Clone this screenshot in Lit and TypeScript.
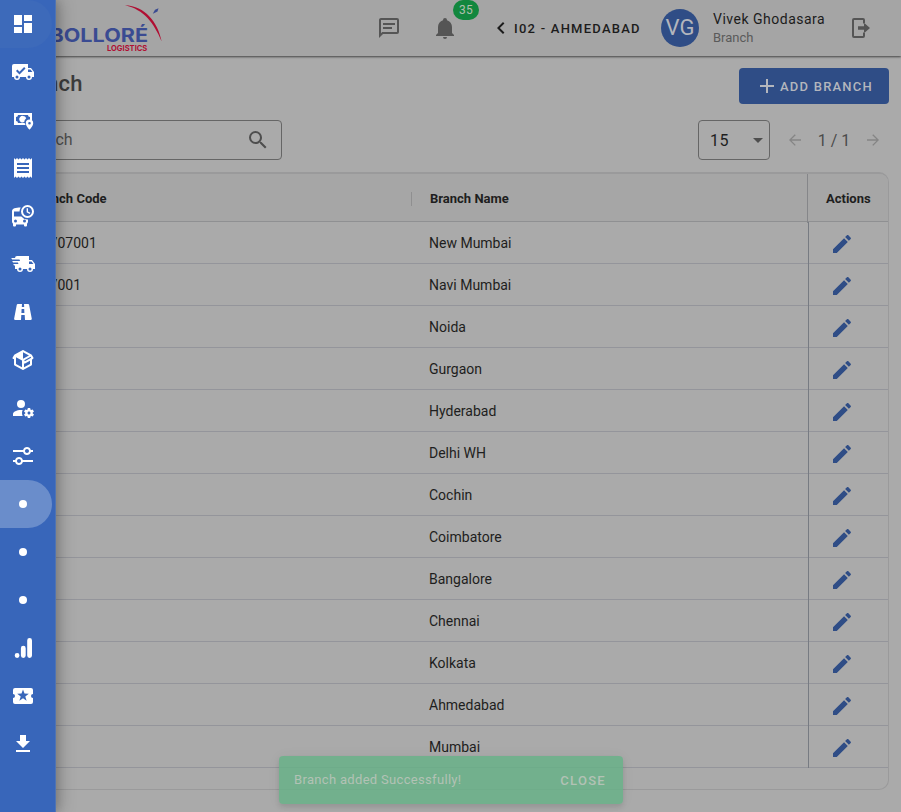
import { LitElement, html, svg, css } from "lit";
import { customElement, property } from "lit/decorators.js";
import { classMap } from "lit/directives/class-map.js";

const ICONS: Record<string, string> = {
  dashboard: "M13,3V9H21V3M13,21H21V11H13M3,21H11V15H3M3,13H11V3H3V13Z",
  truckCheck:
    "M3 4A2 2 0 0 0 1 6V17H3A3 3 0 0 0 9 17H15A3 3 0 0 0 21 17H23V12L20 8H17V4ZM6 15.5A1.5 1.5 0 1 1 6 18.5A1.5 1.5 0 1 1 6 15.5ZM18 15.5A1.5 1.5 0 1 1 18 18.5A1.5 1.5 0 1 1 18 15.5ZM17 9.5H19.5L21.46 12H17ZM5 11L6.4 9.6L8.5 11.7L13.1 7L14.5 8.4L8.5 14.4Z",
  cashMarker:
    "M3 5.1H21V12.3A5 5 0 0 0 19 11.6V9.1A2 2 0 0 1 17 7.1H7A2 2 0 0 1 5 9.1V13.1A2 2 0 0 1 7 15.1H13.6L14.6 17.1H3ZM12 7.9A3.3 3.3 0 0 1 15.2 10.2A5 5 0 0 0 13.2 14A3.3 3.3 0 1 1 12 7.9ZM18.5 11.6A3.7 3.7 0 0 1 22.2 15.3C22.2 18 18.5 21.8 18.5 21.8S14.8 18 14.8 15.3A3.7 3.7 0 0 1 18.5 11.6ZM18.5 14A1.3 1.3 0 1 0 18.5 16.6A1.3 1.3 0 1 0 18.5 14Z",
  receipt:
    "M3,22L4.5,20.5L6,22L7.5,20.5L9,22L10.5,20.5L12,22L13.5,20.5L15,22L16.5,20.5L18,22L19.5,20.5L21,22V2L19.5,3.5L18,2L16.5,3.5L15,2L13.5,3.5L12,2L10.5,3.5L9,2L7.5,3.5L6,2L4.5,3.5L3,2ZM18,9H6V7H18ZM18,13H6V11H18ZM18,17H6V15H18Z",
  busClock:
    "M16.5 1A6.5 6.5 0 1 1 16.5 14A6.5 6.5 0 1 1 16.5 1ZM16.5 3A4.5 4.5 0 1 0 16.5 12A4.5 4.5 0 1 0 16.5 3ZM15.6 4.3H17V7.4L19.4 8.8L18.7 10L15.6 8.2ZM9.7 3.6C4.6 3.7 1 4.2 1 7.6V17.5C1 18.4 1.4 19.2 2 19.7V21.5A1 1 0 0 0 3 22.5H4A1 1 0 0 0 5 21.5V20.5H13V21.5A1 1 0 0 0 14 22.5H15A1 1 0 0 0 16 21.5V19.7C16.6 19.2 17 18.4 17 17.5V15.5A8 8 0 0 1 10.3 12.5H3V7.6H8.5A8 8 0 0 1 9.7 3.6ZM4.5 15.5A1.5 1.5 0 1 1 4.5 18.5A1.5 1.5 0 1 1 4.5 15.5ZM13.5 15.5A1.5 1.5 0 1 1 13.5 18.5A1.5 1.5 0 1 1 13.5 15.5Z",
  truckFast:
    "M3 13.5L2.25 12H7.5L6.9 10.5H2L1.25 9H9.05L8.45 7.5H1.11L.25 6H4A2 2 0 0 1 6 4H18V8H21L24 12V17H22A3 3 0 0 1 16 17H12A3 3 0 0 1 6 17H4V13.5ZM19 15.5A1.5 1.5 0 1 0 19 18.5A1.5 1.5 0 1 0 19 15.5ZM20.5 9.5H18V12H22.46ZM9 15.5A1.5 1.5 0 1 0 9 18.5A1.5 1.5 0 1 0 9 15.5Z",
  road: "M18.1,4.8C18,4.3 17.6,4 17.1,4H13L13.2,7H10.8L11,4H6.8C6.3,4 5.9,4.4 5.8,4.8L3.1,18.8C3,19.4 3.5,20 4.1,20H10L10.3,15H13.7L14,20H19.8C20.4,20 20.9,19.4 20.8,18.8L18.1,4.8M10.4,13L10.6,9H13.2L13.4,13H10.4Z",
  box: "M2,10.96C1.5,10.68 1.35,10.07 1.63,9.59L3.13,7C3.24,6.8 3.41,6.66 3.6,6.58L11.43,2.18C11.59,2.06 11.79,2 12,2C12.21,2 12.41,2.06 12.57,2.18L20.47,6.62C20.66,6.72 20.82,6.88 20.91,7.08L22.36,9.6C22.64,10.08 22.47,10.69 22,10.96L21,11.54V16.5C21,16.88 20.79,17.21 20.47,17.38L12.57,21.82C12.41,21.94 12.21,22 12,22C11.79,22 11.59,21.94 11.43,21.82L3.53,17.38C3.21,17.21 3,16.88 3,16.5V10.96C2.7,11.13 2.32,11.14 2,10.96M12,4.15L12,10.85L17.96,7.5L12,4.15M5,15.91L11,19.29V12.58L5,9.21V15.91M19,15.91V12.69L14,15.59C13.67,15.77 13.3,15.76 13,15.6V19.29L19,15.91M13.85,13.36L20.13,9.73L19.55,8.72L13.27,12.35L13.85,13.36Z",
  accountCog:
    "M10 4A4 4 0 0 0 6 8A4 4 0 0 0 10 12A4 4 0 0 0 14 8A4 4 0 0 0 10 4M17 12C16.87 12 16.76 12.09 16.74 12.21L16.55 13.53C16.25 13.66 15.96 13.82 15.7 14L14.46 13.5C14.35 13.5 14.22 13.5 14.15 13.63L13.15 15.36C13.09 15.47 13.11 15.6 13.21 15.68L14.27 16.5C14.25 16.67 14.24 16.83 14.24 17C14.24 17.17 14.25 17.33 14.27 17.5L13.21 18.32C13.12 18.4 13.09 18.53 13.15 18.64L14.15 20.37C14.21 20.5 14.34 20.5 14.46 20.5L15.7 20C15.96 20.18 16.24 20.35 16.55 20.47L16.74 21.79C16.76 21.91 16.86 22 17 22H19C19.11 22 19.22 21.91 19.24 21.79L19.43 20.47C19.73 20.34 20 20.18 20.27 20L21.5 20.5C21.63 20.5 21.76 20.5 21.83 20.37L22.83 18.64C22.89 18.53 22.86 18.4 22.77 18.32L21.7 17.5C21.72 17.33 21.74 17.17 21.74 17C21.74 16.83 21.73 16.67 21.7 16.5L22.76 15.68C22.85 15.6 22.88 15.47 22.82 15.36L21.82 13.63C21.76 13.5 21.63 13.5 21.5 13.5L20.27 14C20 13.82 19.73 13.65 19.42 13.53L19.23 12.21C19.22 12.09 19.11 12 19 12H17M10 14C5.58 14 2 15.79 2 18V20H11.68A7 7 0 0 1 11 17A7 7 0 0 1 11.64 14.09C11.11 14.03 10.56 14 10 14M18 15.5C18.83 15.5 19.5 16.17 19.5 17C19.5 17.83 18.83 18.5 18 18.5C17.16 18.5 16.5 17.83 16.5 17C16.5 16.17 17.17 15.5 18 15.5Z",
  tune: "M8 13C6.14 13 4.59 14.28 4.14 16H2V18H4.14C4.59 19.72 6.14 21 8 21S11.41 19.72 11.86 18H22V16H11.86C11.41 14.28 9.86 13 8 13M8 19C6.9 19 6 18.1 6 17C6 15.9 6.9 15 8 15S10 15.9 10 17C10 18.1 9.1 19 8 19M19.86 6C19.41 4.28 17.86 3 16 3S12.59 4.28 12.14 6H2V8H12.14C12.59 9.72 14.14 11 16 11S19.41 9.72 19.86 8H22V6H19.86M16 9C14.9 9 14 8.1 14 7C14 5.9 14.9 5 16 5S18 5.9 18 7C18 8.1 17.1 9 16 9Z",
  dot: "M12 8A4 4 0 1 1 12 16A4 4 0 1 1 12 8Z",
  chart:
    "M6.1 17.1A2.4 2.4 0 1 1 6.1 21.9A2.4 2.4 0 1 1 6.1 17.1ZM9.9 12.2A2.4 2.4 0 0 1 14.7 12.2V19.5A2.4 2.4 0 0 1 9.9 19.5ZM16.2 4.4A2.4 2.4 0 0 1 21 4.4V19.5A2.4 2.4 0 0 1 16.2 19.5Z",
  ticket:
    "M20,12A2,2 0 0,0 22,14V18A2,2 0 0,1 20,20H4A2,2 0 0,1 2,18V14A2,2 0 0,0 2,10V6A2,2 0 0,1 4,4H20A2,2 0 0,1 22,6V10A2,2 0 0,0 20,12ZM15.6,16.8L14.3,12.5L17.8,9.8L13.5,9.6L12,5.5L10.5,9.6L6.2,9.8L9.7,12.5L8.4,16.8L12,14.3Z",
  download: "M5,20H19V18H5M19,9H15V3H9V9H5L12,16L19,9Z",
  message:
    "M4,2H20A2,2 0 0,1 22,4V16A2,2 0 0,1 20,18H6L2,22V4C2,2.89 2.9,2 4,2M4,4V17.17L5.17,16H20V4H4M6,7H18V9H6V7M6,11H15V13H6V11Z",
  bell: "M21,19V20H3V19L5,17V11C5,7.9 7.03,5.17 10,4.29V4A2,2 0 0,1 14,4V4.29C16.97,5.17 19,7.9 19,11V17L21,19M14,21A2,2 0 0,1 10,21",
  chevron: "M15.41,16.58L10.83,12L15.41,7.41L14,6L8,12L14,18L15.41,16.58Z",
  exit: "M5 2H14A2 2 0 0 1 16 4V7.5H14V4H5V20H14V16.5H16V20A2 2 0 0 1 14 22H5A2 2 0 0 1 3 20V4A2 2 0 0 1 5 2ZM9 10.2H15V6.7L21 12L15 17.3V13.8H9Z",
  plus: "M19,13H13V19H11V13H5V11H11V5H13V11H19V13Z",
  search:
    "M9.5,3A6.5,6.5 0 0,1 16,9.5C16,11.11 15.41,12.59 14.44,13.73L14.71,14H15.5L20.5,19L19,20.5L14,15.5V14.71L13.73,14.44C12.59,15.41 11.11,16 9.5,16A6.5,6.5 0 0,1 3,9.5A6.5,6.5 0 0,1 9.5,3M9.5,5C7,5 5,7 5,9.5C5,12 7,14 9.5,14C12,14 14,12 14,9.5C14,7 12,5 9.5,5Z",
  menuDown: "M7,10L12,15L17,10H7Z",
  left: "M20 11.1V12.9H7.4L13 18.5L11.7 19.8L4 12L11.7 4.2L13 5.5L7.4 11.1Z",
  right: "M4 11.1V12.9H16.6L11 18.5L12.3 19.8L20 12L12.3 4.2L11 5.5L16.6 11.1Z",
  pencil:
    "M20.71,7.04C21.1,6.65 21.1,6 20.71,5.63L18.37,3.29C18,2.9 17.35,2.9 16.96,3.29L15.12,5.12L18.87,8.87M3,17.25V21H6.75L17.81,9.93L14.06,6.18L3,17.25Z",
};

@customElement("ui-icon")
class UiIcon extends LitElement {
  @property() name = "dot";
  @property({ type: Number }) size = 24;
  static styles = css`
    :host { display: inline-flex; flex: none; }
    svg { display: block; fill: currentColor; }
  `;
  render() {
    return html`<svg width=${this.size} height=${this.size} viewBox="0 0 24 24">
      ${svg`<path fill-rule="evenodd" d=${ICONS[this.name]}></path>`}
    </svg>`;
  }
}

@customElement("side-nav")
class SideNav extends LitElement {
  static styles = css`
    :host {
      display: block;
      box-sizing: border-box;
      width: 56px;
      background: #3866ba;
      border-right: 1px solid #4f74b3;
      color: #fff;
      box-shadow: 4px 0 16px rgba(0, 0, 0, 0.22), 2px 0 8px rgba(0, 0, 0, 0.12);
    }
    .item {
      display: flex;
      align-items: center;
      box-sizing: border-box;
      width: 52px;
      height: 48px;
      padding-left: 11px;
      border-radius: 0 24px 24px 0;
    }
    .root { background: #3d6aba; }
    .active { background: #6a8dcb; }
  `;
  items = ["dashboard", "truckCheck", "cashMarker", "receipt", "busClock", "truckFast", "road", "box",
    "accountCog", "tune", "dot", "dot", "dot", "chart", "ticket", "download"];
  render() {
    return this.items.map(
      (name, i) => html`<div class=${classMap({ item: true, root: i === 0, active: i === 10 })}>
        <ui-icon name=${name}></ui-icon>
      </div>`
    );
  }
}

@customElement("top-bar")
class TopBar extends LitElement {
  static styles = css`
    :host {
      display: flex;
      align-items: center;
      box-sizing: border-box;
      height: 56px;
      padding: 0 28px 0 50px;
      background: #a5a5a5;
      box-shadow: 0 1px 2px rgba(0, 0, 0, 0.6);
      color: #555;
      position: relative;
    }
    .logo { display: block; flex: none; }
    .brand { font: 700 18.8px "Inter", sans-serif; fill: #3a4b92; }
    .sub { font: 700 7.6px "Inter", sans-serif; fill: #b00f33; }
    .chat { margin-left: 207px; }
    .bell { position: relative; display: flex; margin-left: 32px; }
    .badge {
      position: absolute;
      left: 20px;
      top: -16px;
      width: 26px;
      height: 20px;
      border-radius: 10px;
      background: #12873e;
      color: #b0bfae;
      font-size: 12px;
      line-height: 20px;
      text-align: center;
      letter-spacing: 0.2px;
    }
    .site {
      display: flex;
      align-items: center;
      margin-left: 32px;
      width: 151px;
      color: #1c1c1c;
      font-size: 13px;
      font-weight: 500;
      letter-spacing: 1.24px;
      white-space: nowrap;
    }
    .site span { margin-left: 1px; }
    .avatar {
      width: 38px;
      height: 38px;
      margin-left: 21px;
      border-radius: 50%;
      background: #2f4d86;
      color: #b3b6bd;
      font-size: 22px;
      line-height: 38px;
      text-align: center;
    }
    .who { margin-left: 14px; flex: 1; white-space: nowrap; }
    .name { color: #1c1c1c; font-size: 14px; line-height: 18px; letter-spacing: 0.5px; }
    .role { color: #5a5a5a; font-size: 13px; line-height: 18px; padding-top: 1px; margin-bottom: -1px; }
  `;
  render() {
    return html`
      <svg class="logo" width="120" height="56" viewBox="50 0 120 56">
        <text class="brand" x="49.5" y="42" textLength="98.5" lengthAdjust="spacingAndGlyphs">BOLLORÉ</text>
        <text class="sub" x="107" y="51" textLength="40.3" lengthAdjust="spacingAndGlyphs">LOGISTICS</text>
        <path fill="#b00f33" d="M125 5.2C145 6 158 22 161.7 41.5C154 23 144 9.5 125 5.2Z"></path>
        <path fill="#3a4b92" d="M152.8 13.8L155 9.8L158.5 8.3L157.5 11.6Z"></path>
      </svg>
      <ui-icon class="chat" name="message"></ui-icon>
      <div class="bell"><ui-icon name="bell"></ui-icon><span class="badge">35</span></div>
      <div class="site"><ui-icon name="chevron"></ui-icon><span>I02 - AHMEDABAD</span></div>
      <div class="avatar">VG</div>
      <div class="who">
        <div class="name">Vivek Ghodasara</div>
        <div class="role">Branch</div>
      </div>
      <ui-icon name="exit"></ui-icon>
    `;
  }
}

@customElement("branch-table")
class BranchTable extends LitElement {
  static styles = css`
    :host {
      display: block;
      box-sizing: border-box;
      height: 618px;
      border: 1px solid #9a9a9b;
      border-top-width: 2px;
      border-radius: 10px;
      overflow: hidden;
      background: #aaa;
      color: #1e1e20;
    }
    .row {
      display: grid;
      grid-template-columns: 399px 396px 1fr;
      height: 42px;
      box-sizing: border-box;
      border-bottom: 1px solid #94959b;
      font-size: 14px;
      line-height: 42px;
    }
    .cell { padding-left: 17px; }
    .act { border-left: 1px solid #777b82; color: #2f4d86; display: flex; padding: 10px 0 0 21px; }
    .head {
      grid-template-columns: 399px 395px 1fr;
      height: 48px;
      background: #a6a6a6;
      font-size: 13px;
      font-weight: 700;
      line-height: 49px;
      border-bottom-color: #8f9092;
    }
    .head .cell { padding-left: 19px; }
    .head .name { padding-left: 0; display: flex; align-items: center; gap: 18px; }
    .head .name::before { content: ""; width: 1px; height: 14px; margin-left: -1px; background: #8f8f90; }
    .head .act { border-color: #858689; color: inherit; padding: 0 0 0 18px; }
  `;
  rows: [string, string][] = [
    ["I02707001", "New Mumbai"], ["I027001", "Navi Mumbai"], ["", "Noida"], ["", "Gurgaon"],
    ["", "Hyderabad"], ["", "Delhi WH"], ["", "Cochin"], ["", "Coimbatore"],
    ["", "Bangalore"], ["", "Chennai"], ["", "Kolkata"], ["", "Ahmedabad"], ["", "Mumbai"],
  ];
  render() {
    return html`
      <div class="row head">
        <div class="cell">Branch Code</div>
        <div class="cell name">Branch Name</div>
        <div class="act">Actions</div>
      </div>
      ${this.rows.map(
        ([code, name]) => html`<div class="row">
          <div class="cell">${code}</div>
          <div class="cell name">${name}</div>
          <div class="act"><ui-icon name="pencil"></ui-icon></div>
        </div>`
      )}
    `;
  }
}

@customElement("app-root")
class AppRoot extends LitElement {
  static styles = css`
    :host {
      display: block;
      position: relative;
      height: 812px;
      overflow: hidden;
      background: #aaa;
      font-family: Roboto, "Liberation Sans", sans-serif;
    }
    side-nav { position: absolute; inset: 0 auto 0 0; }
    .page { display: flex; flex-direction: column; padding: 12px 12px 0; }
    .heading { display: flex; justify-content: space-between; height: 36px; }
    .title { font-size: 22px; font-weight: 500; line-height: 31px; letter-spacing: 0.28px; color: #3c3c3c; }
    .add {
      display: flex;
      align-items: center;
      box-sizing: border-box;
      width: 150px;
      padding-left: 16px;
      border-radius: 4px;
      background: #2f4d86;
      color: #b3b6bd;
      font-size: 13px;
      font-weight: 500;
      letter-spacing: 1.22px;
      white-space: nowrap;
    }
    .add span { margin-left: 1px; }
    .tools { display: flex; align-items: center; margin: 16px 0 12px; height: 40px; color: #4e4e4e; }
    .search, .select {
      display: flex;
      align-items: center;
      justify-content: space-between;
      box-sizing: border-box;
      height: 40px;
      border: 1px solid #666;
      border-radius: 4px;
    }
    .search { width: 270px; padding: 0 11px 0 11px; font-size: 16px; }
    .search span { padding-bottom: 2px; letter-spacing: -0.1px; }
    .select { width: 72px; margin-left: auto; padding: 0 0 0 11px; font-size: 16px; letter-spacing: 0.5px; color: #1e1e1e; }
    .select ui-icon { color: #4e4e4e; margin-right: -1px; }
    .pager { display: flex; align-items: center; margin: 0 7px 0 16px; width: 96px; justify-content: space-between; font-size: 16px; color: #4b4b4b; }
    .pager ui-icon { color: #858585; }
    .toast {
      position: absolute;
      left: 279px;
      top: 756px;
      display: flex;
      align-items: center;
      justify-content: space-between;
      box-sizing: border-box;
      width: 344px;
      height: 48px;
      padding: 0 17px 0 15px;
      border-radius: 4px;
      background: rgba(100, 178, 134, 0.8);
      box-shadow: 0 3px 5px rgba(0, 0, 0, 0.1), 0 1px 14px rgba(0, 0, 0, 0.05);
      color: #b2c2b5;
      font-size: 13px;
      letter-spacing: 0.32px;
    }
    .toast .msg { padding-bottom: 2px; }
    .close { font-weight: 500; letter-spacing: 1.3px; }
  `;
  render() {
    return html`
      <top-bar></top-bar>
      <main class="page">
        <div class="heading">
          <div class="title">Branch</div>
          <div class="add"><ui-icon name="plus"></ui-icon><span>ADD BRANCH</span></div>
        </div>
        <div class="tools">
          <div class="search"><span>Search</span><ui-icon name="search"></ui-icon></div>
          <div class="select"><span>15</span><ui-icon name="menuDown"></ui-icon></div>
          <div class="pager">
            <ui-icon name="left" size="18"></ui-icon><span>1 / 1</span><ui-icon name="right" size="18"></ui-icon>
          </div>
        </div>
        <branch-table></branch-table>
      </main>
      <div class="toast"><span class="msg">Branch added Successfully!</span><span class="close">CLOSE</span></div>
      <side-nav></side-nav>
    `;
  }
}
